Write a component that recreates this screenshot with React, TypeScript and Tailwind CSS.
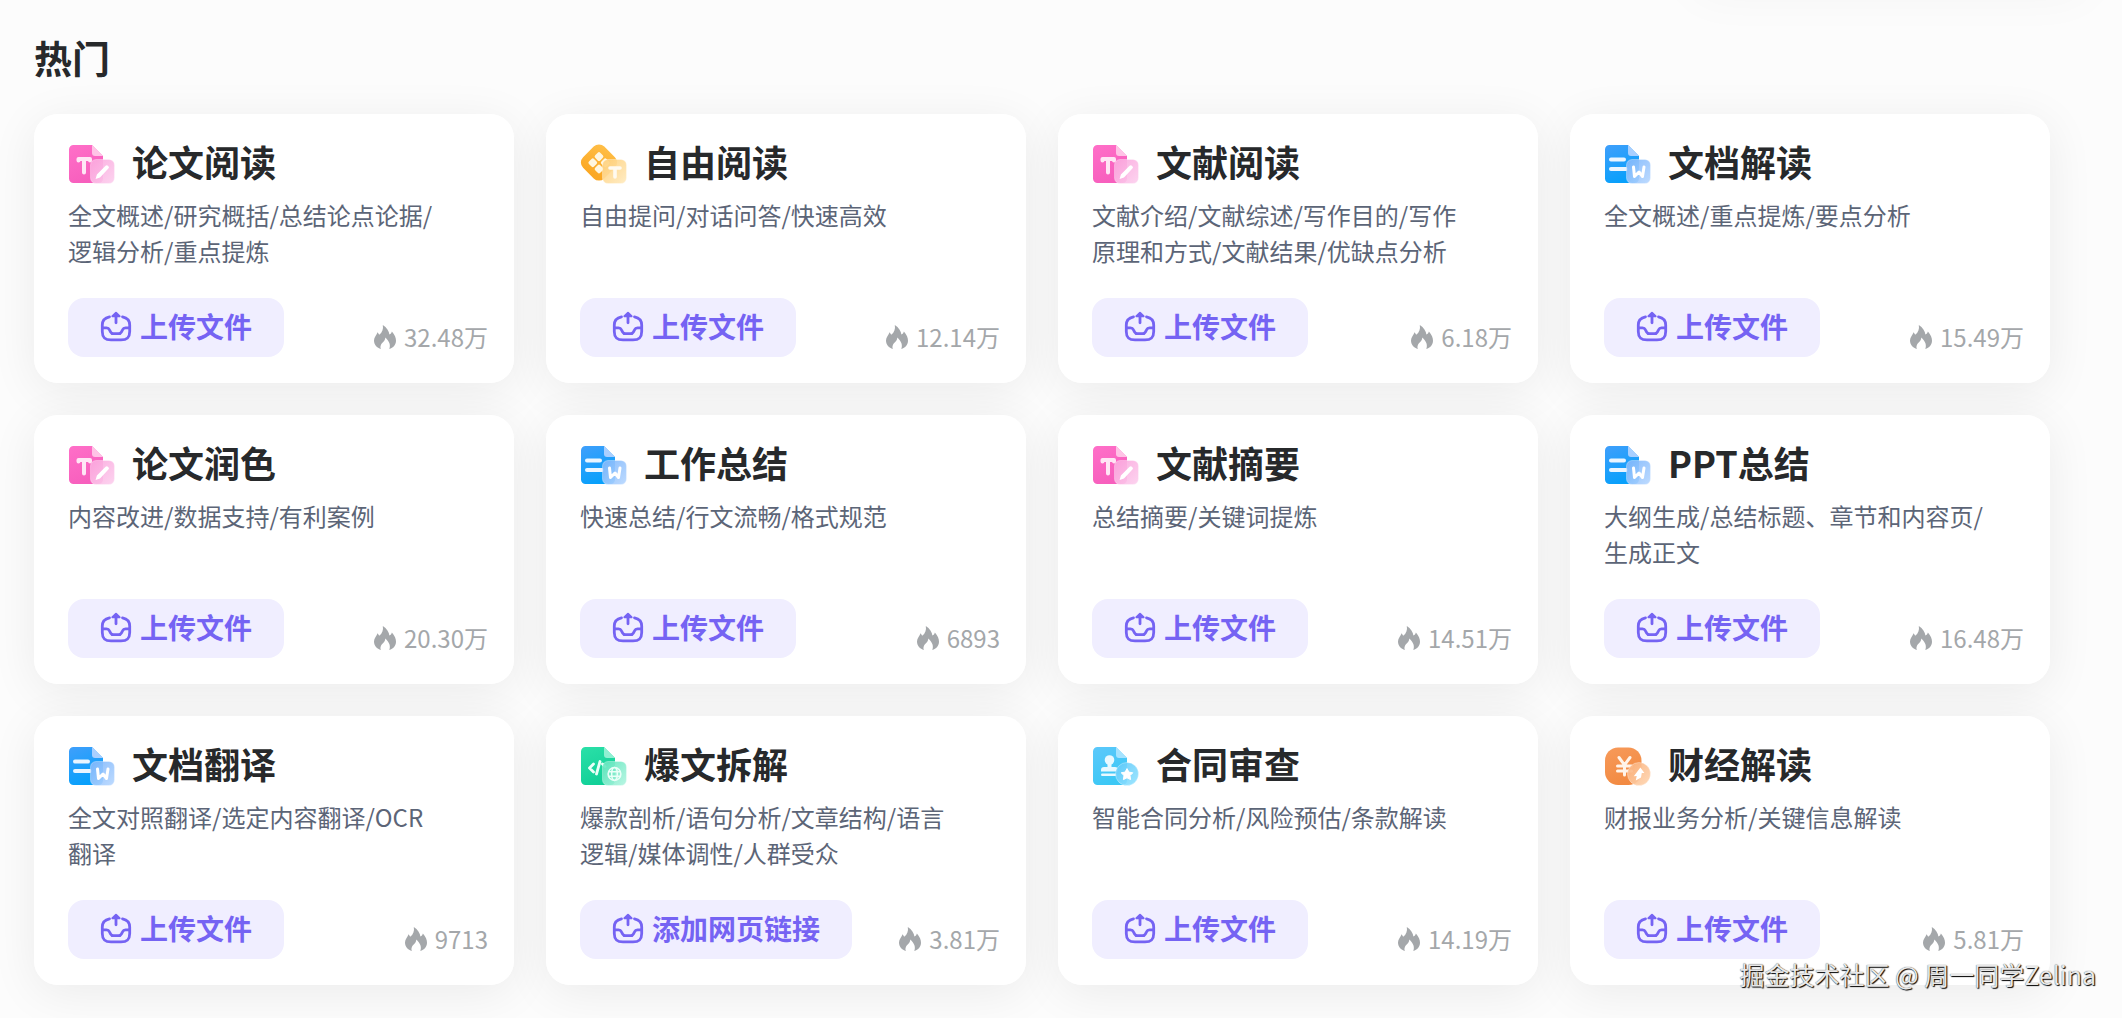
import { useId } from "react";

type IconKind = "paper" | "free" | "doc" | "code" | "contract" | "finance";

type Tool = {
  title: string;
  description: string;
  icon: IconKind;
  heat: string;
  action?: string;
};

const tools: Tool[] = [
  {
    title: "论文阅读",
    description: "全文概述/研究概括/总结论点论据/\n逻辑分析/重点提炼",
    icon: "paper",
    heat: "32.48万",
  },
  {
    title: "自由阅读",
    description: "自由提问/对话问答/快速高效",
    icon: "free",
    heat: "12.14万",
  },
  {
    title: "文献阅读",
    description: "文献介绍/文献综述/写作目的/写作\n原理和方式/文献结果/优缺点分析",
    icon: "paper",
    heat: "6.18万",
  },
  {
    title: "文档解读",
    description: "全文概述/重点提炼/要点分析",
    icon: "doc",
    heat: "15.49万",
  },
  {
    title: "论文润色",
    description: "内容改进/数据支持/有利案例",
    icon: "paper",
    heat: "20.30万",
  },
  {
    title: "工作总结",
    description: "快速总结/行文流畅/格式规范",
    icon: "doc",
    heat: "6893",
  },
  {
    title: "文献摘要",
    description: "总结摘要/关键词提炼",
    icon: "paper",
    heat: "14.51万",
  },
  {
    title: "PPT总结",
    description: "大纲生成/总结标题、章节和内容页/\n生成正文",
    icon: "doc",
    heat: "16.48万",
  },
  {
    title: "文档翻译",
    description: "全文对照翻译/选定内容翻译/OCR\n翻译",
    icon: "doc",
    heat: "9713",
  },
  {
    title: "爆文拆解",
    description: "爆款剖析/语句分析/文章结构/语言\n逻辑/媒体调性/人群受众",
    icon: "code",
    heat: "3.81万",
    action: "添加网页链接",
  },
  {
    title: "合同审查",
    description: "智能合同分析/风险预估/条款解读",
    icon: "contract",
    heat: "14.19万",
  },
  {
    title: "财经解读",
    description: "财报业务分析/关键信息解读",
    icon: "finance",
    heat: "5.81万",
  },
];

// [main from, main to, folded corner, badge from, badge to]
const palettes: Record<IconKind, string[]> = {
  paper: ["#ff6fc8", "#f75fbd", "#ffc3e6", "#fba6dd", "#fcd0ee"],
  free: ["#ffc04a", "#fba824", "#ffd98c", "#ffcf78", "#ffebc0"],
  doc: ["#409ffb", "#08a0fb", "#a9cfff", "#7db6fb", "#b9d8ff"],
  code: ["#2be0a8", "#12d098", "#8ff0d2", "#5fe6bd", "#b4f5e1"],
  contract: ["#5cc8fb", "#3cc8f5", "#a6e3ff", "#5fc9fa", "#97e4ff"],
  finance: ["#f79a5a", "#f28a42", "#ffc79c", "#fbb07a", "#fed6b2"],
};

const SheetShape = ({ fill, fold }: { fill: string; fold: string }) => (
  <>
    <path
      d="M5.500 6H24L35 17V39.500a4.500 4.500 0 0 1-4.500 4.500H5.500a4.500 4.500 0 0 1-4.500-4.500V10.500a4.500 4.500 0 0 1 4.500-4.500z"
      fill={fill}
    />
    <path d="M24 6L35 17H27a3 3 0 0 1-3-3z" fill={fold} />
  </>
);

const ToolIcon = ({ kind }: { kind: IconKind }) => {
  const id = useId();
  const [from, to, fold, badgeFrom, badgeTo] = palettes[kind];
  const main = `url(#${id}-main)`;
  const badge = `url(#${id}-badge)`;
  const isRound = kind === "contract" || kind === "finance";

  return (
    <svg viewBox="0 0 48 48" className="size-12 shrink-0" aria-hidden="true">
      <defs>
        <linearGradient id={`${id}-main`} x1="0" y1="0" x2="0.4" y2="1">
          <stop offset="0" stopColor={from} />
          <stop offset="1" stopColor={to} />
        </linearGradient>
        <linearGradient id={`${id}-badge`} x1="0" y1="0" x2="1" y2="1">
          <stop offset="0" stopColor={badgeFrom} />
          <stop offset="1" stopColor={badgeTo} />
        </linearGradient>
      </defs>

      {kind === "free" && (
        <g transform="rotate(45 19 23.5)">
          <rect x="4" y="8.5" width="30" height="30" rx="7.5" fill={main} />
          <g fill="#fff6df">
            <rect x="11.2" y="15.7" width="7.2" height="7.2" rx="1.8" />
            <rect x="20" y="15.7" width="7.2" height="7.2" rx="1.8" />
            <rect x="11.2" y="24.5" width="7.2" height="7.2" rx="1.8" />
            <rect x="20" y="24.5" width="7.2" height="7.2" rx="1.8" />
          </g>
        </g>
      )}
      {kind === "finance" && (
        <>
          <rect x="1" y="6.5" width="36.500" height="37.500" rx="13" fill={main} />
          <path
            d="M15 16.5L20.5 24L26 16.5M20.5 24V34M13.5 25H27.5M13.5 30H27.5"
            fill="none"
            stroke="#fff4ea"
            strokeWidth="3"
            strokeLinecap="round"
          />
        </>
      )}
      {kind !== "free" && kind !== "finance" && (
        <SheetShape fill={main} fold={fold} />
      )}
      {kind === "paper" && (
        <path
          d="M10.5 21.500V20H22V21.500M16 20V33.500"
          fill="none"
          stroke="#ffe6f5"
          strokeWidth="4"
          strokeLinejoin="round"
          strokeLinecap="round"
        />
      )}
      {kind === "doc" && (
        <path
          d="M7 20.5H20M7 30H22"
          stroke="#eaf5ff"
          strokeWidth="4"
          strokeLinecap="round"
        />
      )}
      {kind === "code" && (
        <path
          d="M13.5 23L9.5 27L13.5 31M20 20.5L16.5 33M22.5 23L25 25.5"
          fill="none"
          stroke="#eafff8"
          strokeWidth="2.8"
          strokeLinecap="round"
          strokeLinejoin="round"
        />
      )}
      {kind === "contract" && (
        <g fill="#e9f9ff">
          <circle cx="17.5" cy="19" r="4.8" />
          <path d="M15.5 21h4v5h3.5a3 3 0 0 1 3 3v1.5H9V29a3 3 0 0 1 3-3h3.5z" />
          <rect x="9" y="32.5" width="16" height="2.4" rx="1.2" />
        </g>
      )}

      {isRound ? (
        <circle
          cx="35"
          cy="33"
          r="11.5"
          fill={badge}
          fillOpacity="0.92"
          stroke="#fff"
          strokeOpacity="0.4"
          strokeWidth="0.8"
        />
      ) : (
        <rect
          x="22.5"
          y="20.5"
          width="24"
          height="24"
          rx="5.5"
          fill={badge}
          fillOpacity="0.92"
          stroke="#fff"
          strokeOpacity="0.4"
          strokeWidth="0.8"
        />
      )}
      {kind === "paper" && (
        <path
          d="M37.6 26.8a1.6 1.6 0 0 1 2.3 0l.5.5a1.6 1.6 0 0 1 0 2.3L32 38.4l-4.4 1.5 1.3-4.4z"
          fill="#fff"
        />
      )}
      {kind === "free" && (
        <path
          d="M30 29H40M35 29V38"
          stroke="#fffaf0"
          strokeWidth="3.6"
          strokeLinecap="round"
        />
      )}
      {kind === "doc" && (
        <path
          d="M29.500 28L30.500 37.500L35 33L38.500 37.500L40 28"
          fill="none"
          stroke="#fff"
          strokeWidth="3"
          strokeLinecap="round"
          strokeLinejoin="round"
        />
      )}
      {kind === "code" && (
        <g fill="none" stroke="#eafff8" strokeWidth="1.5">
          <circle cx="34.5" cy="33" r="6.4" />
          <ellipse cx="34.5" cy="33" rx="2.8" ry="6.4" />
          <path d="M28.5 30.8H40.5M28.5 35.2H40.5" />
        </g>
      )}
      {kind === "contract" && (
        <path
          d="M35 27.6l1.9 3.5 3.9.7-2.8 2.8.6 4-3.6-1.8-3.6 1.8.6-4-2.8-2.8 3.9-.7z"
          fill="#fff"
          stroke="#fff"
          strokeLinejoin="round"
        />
      )}
      {kind === "finance" && (
        <path
          d="M36.4 26.5l4 5.5h-2.6l-.8 4.5-5.2 3 .9-4.5-2.9.2z"
          fill="#fff"
        />
      )}
    </svg>
  );
};

const UploadIcon = () => (
  <svg
    viewBox="0 0 32 32"
    className="size-8 shrink-0"
    fill="none"
    stroke="currentColor"
    strokeWidth="2.8"
    strokeLinecap="round"
    strokeLinejoin="round"
    aria-hidden="true"
  >
    <path d="M9.5 5.8C4.5 6.8 2.3 9 2.3 14V20.5C2.3 26.5 4.8 28.9 11 28.9H21C27.2 28.9 29.7 26.5 29.7 20.5V14C29.7 9 27.5 6.8 22.5 5.8" />
    <path d="M2.5 16.8H6.5C8 16.8 8.9 17.5 9.5 18.8L10.5 20.8C11.2 22.2 12 22.7 13.5 22.7H18.5C20 22.7 20.800 22.2 21.5 20.8L22.5 18.8C23.1 17.5 24 16.8 25.5 16.8H29.5" />
    <path d="M16 11.8V4" />
    <path d="M16 1.8L19.6 5.2H12.4z" fill="currentColor" strokeWidth="2" />
  </svg>
);

const FlameIcon = () => (
  <svg
    viewBox="0 0 22 24"
    className="h-6 w-[22px] shrink-0"
    fill="currentColor"
    aria-hidden="true"
  >
    <path d="M8.8 0C12.8 2.6 15 6 15.4 9.6C16.6 9 17.5 8 17.9 6.5C20.8 9.8 22 12.8 22 15.8C22 19.8 19.2 23 15.3 24C16.8 20.5 15.6 16.500 11.3 12.6C11.1 16.5 8 17.6 6.9 20C6.2 21.6 6.4 23 7 24C3 23 0 19.7 0 15.5C0 12 2.6 10 3.6 7.2L5.2 9.8C8.2 7.6 9.6 4 8.8 0Z" />
  </svg>
);

const ToolCard = ({ tool }: { tool: Tool }) => (
  <article className="relative flex flex-col rounded-3xl bg-white pt-[25px] pr-[26px] pb-[26px] pl-[34px]">
    <div className="flex items-center gap-4">
      <ToolIcon kind={tool.icon} />
      <h3 className="pb-1 text-4xl/11 font-bold text-[#27292b]">
        {tool.title}
      </h3>
    </div>
    <p className="mt-[10px] min-h-18 text-2xl/9 whitespace-pre-line text-[#5c6577]">
      {tool.description}
    </p>
    <div className="mt-[29px] flex items-end justify-between">
      <button
        type="button"
        className="flex items-center gap-2 rounded-2xl bg-[#f0eeff] px-8 pt-[7px] pb-[9px] text-[28px]/[43px] font-bold text-[#7563f3] hover:bg-[#e6e2ff]"
      >
        <UploadIcon />
        {tool.action ?? "上传文件"}
      </button>
      <span className="flex items-center gap-2 text-2xl/10 text-[#a4a7aa]">
        <FlameIcon />
        {tool.heat}
      </span>
    </div>
  </article>
);

const App = () => {
  return (
    <main
      lang="zh-CN"
      className="relative min-h-screen overflow-hidden bg-[#fcfcfc] pt-[33px] pr-[72px] pb-[33px] pl-[34px] font-['Noto_Sans_CJK_SC',sans-serif]"
    >
      <div className="absolute -top-16 right-8 h-12 w-[400px] rounded-3xl shadow-[0_12px_48px_rgba(0,0,0,0.04)]" />
      <h2 className="text-[38px]/12 font-bold text-[#27292b]">热门</h2>
      <section className="mt-[33px] grid grid-cols-4 gap-8">
        {tools.map((tool) => (
          <div
            key={tool.title}
            className="rounded-3xl shadow-[0_8px_48px_rgba(0,0,0,0.07)]"
          >
            <ToolCard tool={tool} />
          </div>
        ))}
      </section>
      <p className="absolute right-[26px] bottom-[26px] text-[25px]/9 text-[#e8e8e8] [text-shadow:1px_1px_1px_#000,0_0_1px_#444]">
        掘金技术社区 @ 周一同学Zelina
      </p>
    </main>
  );
};

export default App;
